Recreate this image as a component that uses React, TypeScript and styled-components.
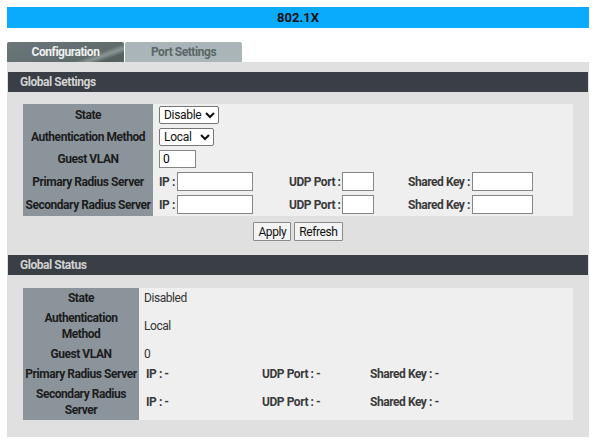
import * as React from 'react';
import styled, { createGlobalStyle } from 'styled-components';

const GlobalStyle = createGlobalStyle`
    body {
        margin: 0;
        background: #ffffff;
        font-family: Roboto, 'Liberation Sans', sans-serif;
        font-size: 12px;
        letter-spacing: -0.45px;
        color: #222;
    }
`;

const Page = styled.div`
    padding: 7px 11px 0 7px;
`;

const TitleBar = styled.div`
    height: 21px;
    background: #0aabfc;
    color: #111;
    font-weight: bold;
    font-size: 13px;
    letter-spacing: 0;
    line-height: 21px;
    text-align: center;
`;

const Tabs = styled.div`
    display: flex;
    margin-top: 14px;
    height: 20px;
`;

const Tab = styled.div<{ active?: boolean }>`
    width: 117px;
    margin-right: 1px;
    text-align: center;
    font-weight: bold;
    font-size: 12px;
    line-height: 21px;
    color: ${(props) => (props.active ? '#eef0f0' : '#5b6668')};
    background: ${(props) =>
        props.active
            ? 'linear-gradient(160deg, #6b7778 0%, #5f6a6b 70%, #8a9596 78%, #56605f 86%)'
            : '#a9b5b6'};
    border-radius: 2px 2px 0 0;
`;

const Panel = styled.div`
    background: #e0e0e0;
    padding: 10px 1px 17px 1px;
`;

const SectionHeader = styled.div`
    height: 20px;
    line-height: 21px;
    background: #3a3e45;
    color: #d2d2d2;
    font-weight: bold;
    padding-left: 12px;
`;

const Table = styled.table<{ top: number }>`
    width: 550px;
    margin: ${(props) => props.top}px 15px 0 15px;
    border-collapse: collapse;
    background: #efefef;
`;

const LabelCell = styled.td<{ width: number }>`
    width: ${(props) => props.width}px;
    min-width: ${(props) => props.width}px;
    box-sizing: border-box;
    background: #8b949b;
    color: #1c1c1c;
    font-weight: bold;
    text-align: center;
    white-space: nowrap;
    padding: 2px 2px;
    line-height: 16px;
`;

const ValueCell = styled.td<{ pad: number }>`
    padding: 2px ${(props) => props.pad}px;
    line-height: 16px;
    color: #333;
    white-space: nowrap;
`;

const Inline = styled.div`
    display: flex;
    align-items: center;
`;

const FieldGroup = styled.div<{ width: number }>`
    display: flex;
    align-items: center;
    flex: none;
    width: ${(props) => props.width}px;
`;

const FieldLabel = styled.span`
    font-weight: bold;
    color: #3a3a3a;
    margin-right: 2px;
    white-space: nowrap;
`;

const Select = styled.select<{ width?: number }>`
    width: ${(props) => (props.width ? `${props.width}px` : 'auto')};
    height: 18px;
    font-family: inherit;
    font-size: 12px;
    letter-spacing: -0.3px;
    border: 1px solid #767676;
    border-radius: 2px;
    background: #fff;
    padding: 0;
    color: #111;
`;

const TextBox = styled.input<{ width: number; h?: number }>`
    width: ${(props) => props.width}px;
    height: ${(props) => props.h || 18}px;
    box-sizing: border-box;
    font-family: inherit;
    font-size: 12px;
    border: 1px solid #858585;
    background: #fff;
    padding: 0 3px;
    margin: 0;
`;

const ButtonRow = styled.div`
    display: flex;
    justify-content: center;
    gap: 3px;
    margin: 6px 0 14px 0;
`;

const Button = styled.button`
    height: 19px;
    font-family: inherit;
    font-size: 12px;
    letter-spacing: -0.4px;
    padding: 0 4px;
    border: 1px solid #8a8a8a;
    background: #f4f4f4;
    color: #111;
    border-radius: 1px;
`;

interface ServerProps {
    status?: boolean;
}

function ServerFields(props: ServerProps): JSX.Element {
    if (props.status) {
        return (
            <Inline>
                <FieldGroup width={116}>
                    <FieldLabel>IP : -</FieldLabel>
                </FieldGroup>
                <FieldGroup width={108}>
                    <FieldLabel>UDP Port : -</FieldLabel>
                </FieldGroup>
                <FieldGroup width={100}>
                    <FieldLabel>Shared Key : -</FieldLabel>
                </FieldGroup>
            </Inline>
        );
    }
    return (
        <Inline>
            <FieldGroup width={130}>
                <FieldLabel>IP :</FieldLabel>
                <TextBox width={76} h={19} />
            </FieldGroup>
            <FieldGroup width={119}>
                <FieldLabel>UDP Port :</FieldLabel>
                <TextBox width={32} h={19} />
            </FieldGroup>
            <FieldGroup width={130}>
                <FieldLabel>Shared Key :</FieldLabel>
                <TextBox width={61} h={19} />
            </FieldGroup>
        </Inline>
    );
}

export default function App(): JSX.Element {
    return (
        <>
            <GlobalStyle />
            <Page>
                <TitleBar>802.1X</TitleBar>
                <Tabs>
                    <Tab active>Configuration</Tab>
                    <Tab>Port Settings</Tab>
                </Tabs>
                <Panel>
                    <SectionHeader>Global Settings</SectionHeader>
                    <Table top={12}>
                        <tbody>
                            <tr>
                                <LabelCell width={130}>State</LabelCell>
                                <ValueCell pad={6}>
                                    <Select defaultValue="Disable">
                                        <option>Disable</option>
                                        <option>Enable</option>
                                    </Select>
                                </ValueCell>
                            </tr>
                            <tr>
                                <LabelCell width={130}>Authentication Method</LabelCell>
                                <ValueCell pad={6}>
                                    <Select width={55} defaultValue="Local">
                                        <option>Local</option>
                                        <option>Radius</option>
                                    </Select>
                                </ValueCell>
                            </tr>
                            <tr>
                                <LabelCell width={130}>Guest VLAN</LabelCell>
                                <ValueCell pad={6}>
                                    <TextBox width={37} defaultValue="0" />
                                </ValueCell>
                            </tr>
                            <tr>
                                <LabelCell width={130}>Primary Radius Server</LabelCell>
                                <ValueCell pad={6}>
                                    <ServerFields />
                                </ValueCell>
                            </tr>
                            <tr>
                                <LabelCell width={130}>Secondary Radius Server</LabelCell>
                                <ValueCell pad={6}>
                                    <ServerFields />
                                </ValueCell>
                            </tr>
                        </tbody>
                    </Table>
                    <ButtonRow>
                        <Button>Apply</Button>
                        <Button>Refresh</Button>
                    </ButtonRow>
                    <SectionHeader>Global Status</SectionHeader>
                    <Table top={13}>
                        <tbody>
                            <tr>
                                <LabelCell width={116}>State</LabelCell>
                                <ValueCell pad={5}>Disabled</ValueCell>
                            </tr>
                            <tr>
                                <LabelCell width={116}>
                                    Authentication
                                    <br />
                                    Method
                                </LabelCell>
                                <ValueCell pad={5}>Local</ValueCell>
                            </tr>
                            <tr>
                                <LabelCell width={116}>Guest VLAN</LabelCell>
                                <ValueCell pad={5}>0</ValueCell>
                            </tr>
                            <tr>
                                <LabelCell width={116}>Primary Radius Server</LabelCell>
                                <ValueCell pad={7}>
                                    <ServerFields status />
                                </ValueCell>
                            </tr>
                            <tr>
                                <LabelCell width={116}>
                                    Secondary Radius
                                    <br />
                                    Server
                                </LabelCell>
                                <ValueCell pad={7}>
                                    <ServerFields status />
                                </ValueCell>
                            </tr>
                        </tbody>
                    </Table>
                </Panel>
            </Page>
        </>
    );
}
